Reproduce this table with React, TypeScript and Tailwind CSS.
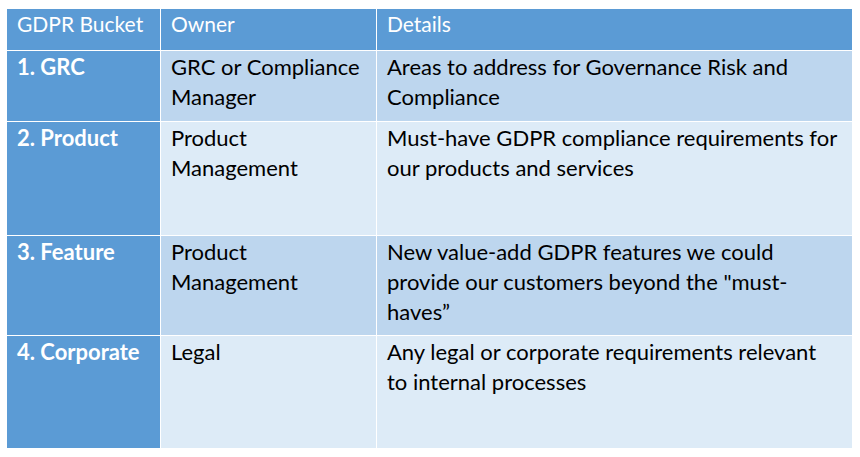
const rows = [
  {
    bucket: '1. GRC',
    owner: ['GRC or Compliance', 'Manager'],
    details: ['Areas to address for Governance Risk and', 'Compliance'],
    band: 'bg-[#bdd6ee]',
  },
  {
    bucket: '2. Product',
    owner: ['Product', 'Management'],
    details: ['Must-have GDPR compliance requirements for', 'our products and services'],
    band: 'bg-[#ddebf7]',
  },
  {
    bucket: '3. Feature',
    owner: ['Product', 'Management'],
    details: [
      'New value-add GDPR features we could',
      'provide our customers beyond the "must-',
      'haves\u201d',
    ],
    band: 'bg-[#bdd6ee]',
  },
  {
    bucket: '4. Corporate',
    owner: ['Legal'],
    details: ['Any legal or corporate requirements relevant', 'to internal processes'],
    band: 'bg-[#ddebf7]',
  },
]

function Lines({ lines }: { lines: string[] }) {
  return (
    <>
      {lines.map((l, i) => (
        <div key={i} className="whitespace-nowrap">
          {l}
        </div>
      ))}
    </>
  )
}

export default function App() {
  return (
    <div className="w-[860px] h-[457px] bg-white pt-[9px] pl-[7px]">
      <div
        className="grid grid-cols-[153px_215px_475px] grid-rows-[41px_70px_113px_99px_112px] gap-px w-[845px] text-[22px] leading-[30px]"
        style={{ fontFamily: 'Lato, "Open Sans", sans-serif' }}
      >
        {/* Header */}
        <div className="bg-[#5b9bd5] px-[10px] text-[21px] text-white">GDPR Bucket</div>
        <div className="bg-[#5b9bd5] px-[10px] text-[21px] text-white">Owner</div>
        <div className="bg-[#5b9bd5] px-[10px] text-[21px] text-white">Details</div>

        {rows.map((r) => (
          <div key={r.bucket} className="contents">
            <div className="bg-[#5b9bd5] px-[10px] pt-px font-bold text-white">{r.bucket}</div>
            <div className={`${r.band} px-[10px] pt-px text-black`}>
              <Lines lines={r.owner} />
            </div>
            <div className={`${r.band} px-[10px] pt-px text-black`}>
              <Lines lines={r.details} />
            </div>
          </div>
        ))}
      </div>
    </div>
  )
}
